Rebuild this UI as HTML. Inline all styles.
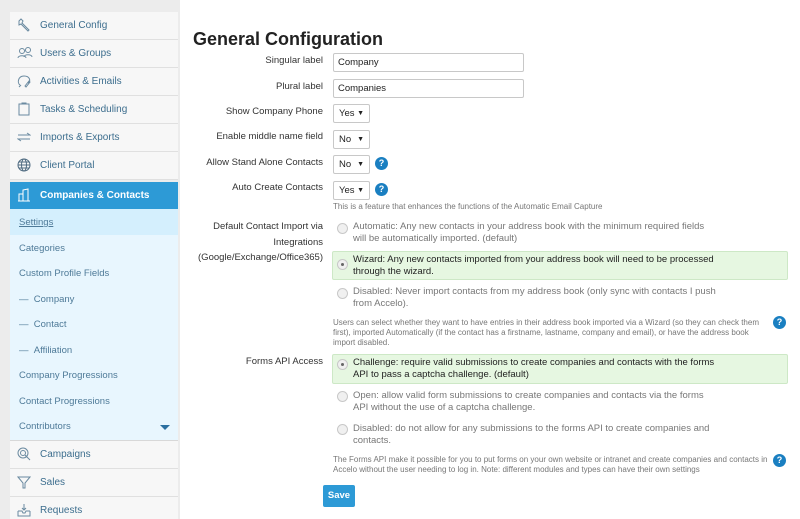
<!DOCTYPE html><html><head><style>
html,body{margin:0;width:800px;height:519px;overflow:hidden}
body{background:#ececec;font-family:"Liberation Sans",sans-serif;position:relative}
.a{position:absolute;white-space:nowrap}
.nav{position:absolute;left:10px;width:168px;height:27px;background:#f7f7f7;border-bottom:1px solid #e0e0e0;color:#3d6e8e;font-size:10px;line-height:27px}
.nav span{position:absolute;left:30px}
.nav svg{position:absolute;left:7px;top:6px}
.sub{position:absolute;left:10px;width:168px;height:25px;color:#4e7a98;font-size:9.5px;line-height:25px}
.sub span{position:absolute;left:9px}
#main{position:absolute;left:180px;top:0;width:620px;height:519px;background:#fff}
.lab{position:absolute;right:477px;font-size:9.5px;color:#333;text-align:right;white-space:nowrap}
.inp{position:absolute;left:333px;width:185px;height:17px;border:1px solid #c8c8c8;border-radius:2px;font-size:9.5px;line-height:17px;padding-left:4px;color:#222}
.sel{position:absolute;left:333px;width:35px;height:17px;border:1px solid #c8c8c8;border-radius:2px;font-size:9.5px;line-height:17px;color:#222}
.sel span{position:absolute;left:5px}.sel i{position:absolute;right:5px;font-style:normal;font-size:7px}
.q{position:absolute;width:13px;height:13px;border-radius:50%;background:#1a7fc1;color:#fff;font-size:9px;font-weight:bold;text-align:center;line-height:13px}
.rad{position:absolute;width:9px;height:9px;border-radius:50%;border:1px solid #c8c8c8;background:#f0f0f0}
.rad.on::after{content:"";position:absolute;left:3px;top:3px;width:3px;height:3px;border-radius:50%;background:#666}
.opt{position:absolute;left:353px;font-size:9.5px;line-height:11.5px;color:#777;white-space:nowrap}
.opt.s{color:#222}
.green{position:absolute;left:332px;width:454px;background:#e6f7e1;border:1px solid #cde8c6;border-radius:2px}
.help{position:absolute;left:333px;font-size:8px;color:#777;line-height:10px;white-space:nowrap}
</style></head><body>
<div class="nav" style="top:12px"><svg width="14" height="14" viewBox="0 0 14 14" fill="none" stroke="#6a8aa0"><path d="M2 3l2-2 2 2-1 2 7 7-1 1-7-7-2 1z"/></svg><span>General Config</span></div>
<div class="nav" style="top:40px"><svg width="16" height="14" viewBox="0 0 16 14" fill="none" stroke="#6a8aa0"><circle cx="5" cy="5" r="2.5"/><circle cx="11" cy="4" r="2.5"/><path d="M1 12c0-3 8-3 8 0M7 11c0-3 8-3 8 0"/></svg><span>Users &amp; Groups</span></div>
<div class="nav" style="top:68px"><svg width="14" height="14" viewBox="0 0 14 14" fill="none" stroke="#6a8aa0"><path d="M3 11C0 9 1 2 7 2s7 5 4 7M4 11l-2 2M8 12l4-5 1 1-4 5z"/></svg><span>Activities &amp; Emails</span></div>
<div class="nav" style="top:96px"><svg width="14" height="14" viewBox="0 0 14 14" fill="none" stroke="#6a8aa0"><rect x="2" y="2" width="10" height="11"/><path d="M5 2V1h4v1"/></svg><span>Tasks &amp; Scheduling</span></div>
<div class="nav" style="top:124px"><svg width="14" height="14" viewBox="0 0 14 14" fill="none" stroke="#6a8aa0"><path d="M1 5h12l-3-2M13 9H1l3 2"/></svg><span>Imports &amp; Exports</span></div>
<div class="nav" style="top:152px"><svg width="14" height="14" viewBox="0 0 14 14" fill="none" stroke="#4e6a80"><circle cx="7" cy="7" r="6"/><ellipse cx="7" cy="7" rx="2.5" ry="6"/><path d="M1 7h12M2 4h10M2 10h10"/></svg><span>Client Portal</span></div>
<div class="nav" style="top:182px;height:27px;background:#2d9ad6;color:#fff;font-weight:bold;border:0"><svg width="14" height="14" viewBox="0 0 14 14" fill="none" stroke="#fff"><path d="M2 13V6h4v7M6 13V2l5-1v12M1 13h12"/></svg><span>Companies &amp; Contacts</span></div>
<div style="position:absolute;left:10px;top:209px;width:168px;height:231px;background:#e8f6fe;border-bottom:1px solid #d8d8d8"></div>
<div style="position:absolute;left:10px;top:209px;width:168px;height:26px;background:#d4effd"></div>
<div class="sub" style="top:210px"><span style="text-decoration:underline">Settings</span></div>
<div class="sub" style="top:236px"><span>Categories</span></div>
<div class="sub" style="top:261px"><span>Custom Profile Fields</span></div>
<div class="sub" style="top:287px"><span>— &nbsp;Company</span></div>
<div class="sub" style="top:312px"><span>— &nbsp;Contact</span></div>
<div class="sub" style="top:338px"><span>— &nbsp;Affiliation</span></div>
<div class="sub" style="top:363px"><span>Company Progressions</span></div>
<div class="sub" style="top:389px"><span>Contact Progressions</span></div>
<div class="sub" style="top:414px"><span>Contributors</span><i style="position:absolute;right:8px;top:11px;border:5px solid transparent;border-top:5px solid #2a6fa0;border-bottom:0"></i></div>
<div class="nav" style="top:441px"><svg width="14" height="14" viewBox="0 0 14 14" fill="none" stroke="#6a8aa0"><circle cx="6" cy="6" r="5"/><circle cx="6" cy="6" r="2.5"/><path d="M8 8l5 5"/></svg><span>Campaigns</span></div>
<div class="nav" style="top:469px"><svg width="14" height="14" viewBox="0 0 14 14" fill="none" stroke="#6a8aa0"><path d="M1 2h12L8 8v5H6V8z"/></svg><span>Sales</span></div>
<div class="nav" style="top:497px"><svg width="14" height="14" viewBox="0 0 14 14" fill="none" stroke="#6a8aa0"><path d="M1 8v5h12V8M1 8h4l1 2h2l1-2h4M7 1v6M5 5l2 2 2-2"/></svg><span>Requests</span></div>

<div id="main"></div>
<div class="a" style="left:193px;top:29px;font-size:18px;font-weight:bold;color:#222">General Configuration</div>
<div class="lab" style="top:55px">Singular label</div><div class="inp" style="top:53px">Company</div>
<div class="lab" style="top:81px">Plural label</div><div class="inp" style="top:79px">Companies</div>
<div class="lab" style="top:106px">Show Company Phone</div><div class="sel" style="top:104px"><span>Yes</span><i>▼</i></div>
<div class="lab" style="top:131px">Enable middle name field</div><div class="sel" style="top:130px"><span>No</span><i>▼</i></div>
<div class="lab" style="top:157px">Allow Stand Alone Contacts</div><div class="sel" style="top:155px"><span>No</span><i>▼</i></div><div class="q" style="left:375px;top:157px">?</div>
<div class="lab" style="top:182px">Auto Create Contacts</div><div class="sel" style="top:181px"><span>Yes</span><i>▼</i></div><div class="q" style="left:375px;top:183px">?</div>
<div class="help" style="top:202px">This is a feature that enhances the functions of the Automatic Email Capture</div>
<div class="lab" style="top:219px;line-height:15.5px">Default Contact Import via<br>Integrations<br>(Google/Exchange/Office365)</div>
<div class="rad" style="left:337px;top:223px"></div>
<div class="opt" style="top:221px">Automatic: Any new contacts in your address book with the minimum required fields<br>will be automatically imported. (default)</div>
<div class="green" style="top:251px;height:27px"></div>
<div class="rad on" style="left:337px;top:259px"></div>
<div class="opt s" style="top:254px">Wizard: Any new contacts imported from your address book will need to be processed<br>through the wizard.</div>
<div class="rad" style="left:337px;top:288px"></div>
<div class="opt" style="top:286px">Disabled: Never import contacts from my address book (only sync with contacts I push<br>from Accelo).</div>
<div class="help" style="top:318px">Users can select whether they want to have entries in their address book imported via a Wizard (so they can check them<br>first), imported Automatically (if the contact has a firstname, lastname, company and email), or have the address book<br>import disabled.</div>
<div class="q" style="left:773px;top:316px">?</div>
<div class="lab" style="top:356px">Forms API Access</div>
<div class="green" style="top:354px;height:28px"></div>
<div class="rad on" style="left:337px;top:359px"></div>
<div class="opt s" style="top:357px">Challenge: require valid submissions to create companies and contacts with the forms<br>API to pass a captcha challenge. (default)</div>
<div class="rad" style="left:337px;top:391px"></div>
<div class="opt" style="top:390px">Open: allow valid form submissions to create companies and contacts via the forms<br>API without the use of a captcha challenge.</div>
<div class="rad" style="left:337px;top:424px"></div>
<div class="opt" style="top:423px">Disabled: do not allow for any submissions to the forms API to create companies and<br>contacts.</div>
<div class="help" style="top:455px">The Forms API make it possible for you to put forms on your own website or intranet and create companies and contacts in<br>Accelo without the user needing to log in. Note: different modules and types can have their own settings</div>
<div class="q" style="left:773px;top:454px">?</div>
<div class="a" style="left:323px;top:485px;width:32px;height:22px;background:#2d9ad6;border-radius:2px;color:#fff;font-size:9.5px;font-weight:bold;text-align:center;line-height:22px">Save</div>
</body></html>
